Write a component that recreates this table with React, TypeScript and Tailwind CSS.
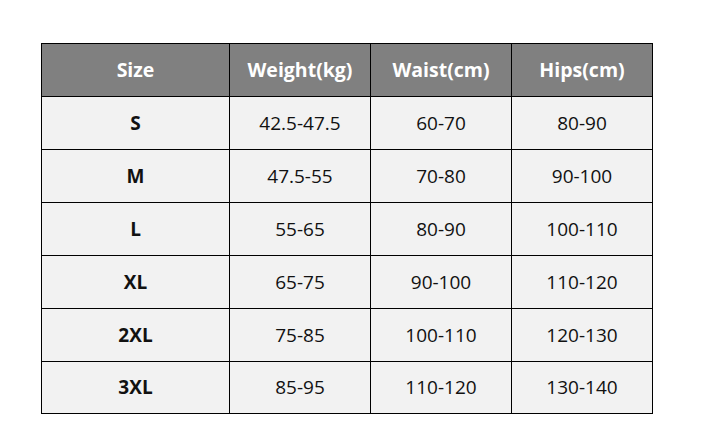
import React from "react";

const header = ["Size", "Weight(kg)", "Waist(cm)", "Hips(cm)"];
const rows = [
  ["S", "42.5-47.5", "60-70", "80-90"],
  ["M", "47.5-55", "70-80", "90-100"],
  ["L", "55-65", "80-90", "100-110"],
  ["XL", "65-75", "90-100", "110-120"],
  ["2XL", "75-85", "100-110", "120-130"],
  ["3XL", "85-95", "110-120", "130-140"],
];

export default function App() {
  return (
    <div
      className="w-[712px] h-[446px] bg-white pl-[41px] pt-[43px]"
      style={{ fontFamily: '"Open Sans", "Noto Sans", sans-serif' }}
    >
      <div className="inline-grid grid-cols-[187px_140px_140px_140px] grid-rows-[52px_52px_52px_52px_52px_52px_51px] gap-px bg-black p-px">
        {header.map((h) => (
          <div
            key={h}
            className="bg-[#808080] text-white font-bold text-[19.5px] flex items-center justify-center"
          >
            {h}
          </div>
        ))}
        {rows.map((r) =>
          r.map((c, i) => (
            <div
              key={r[0] + i}
              className={`bg-[#f2f2f2] text-[#111] text-[19px] flex items-center justify-center ${
                i === 0 ? "font-bold" : ""
              }`}
            >
              {c}
            </div>
          ))
        )}
      </div>
    </div>
  );
}
